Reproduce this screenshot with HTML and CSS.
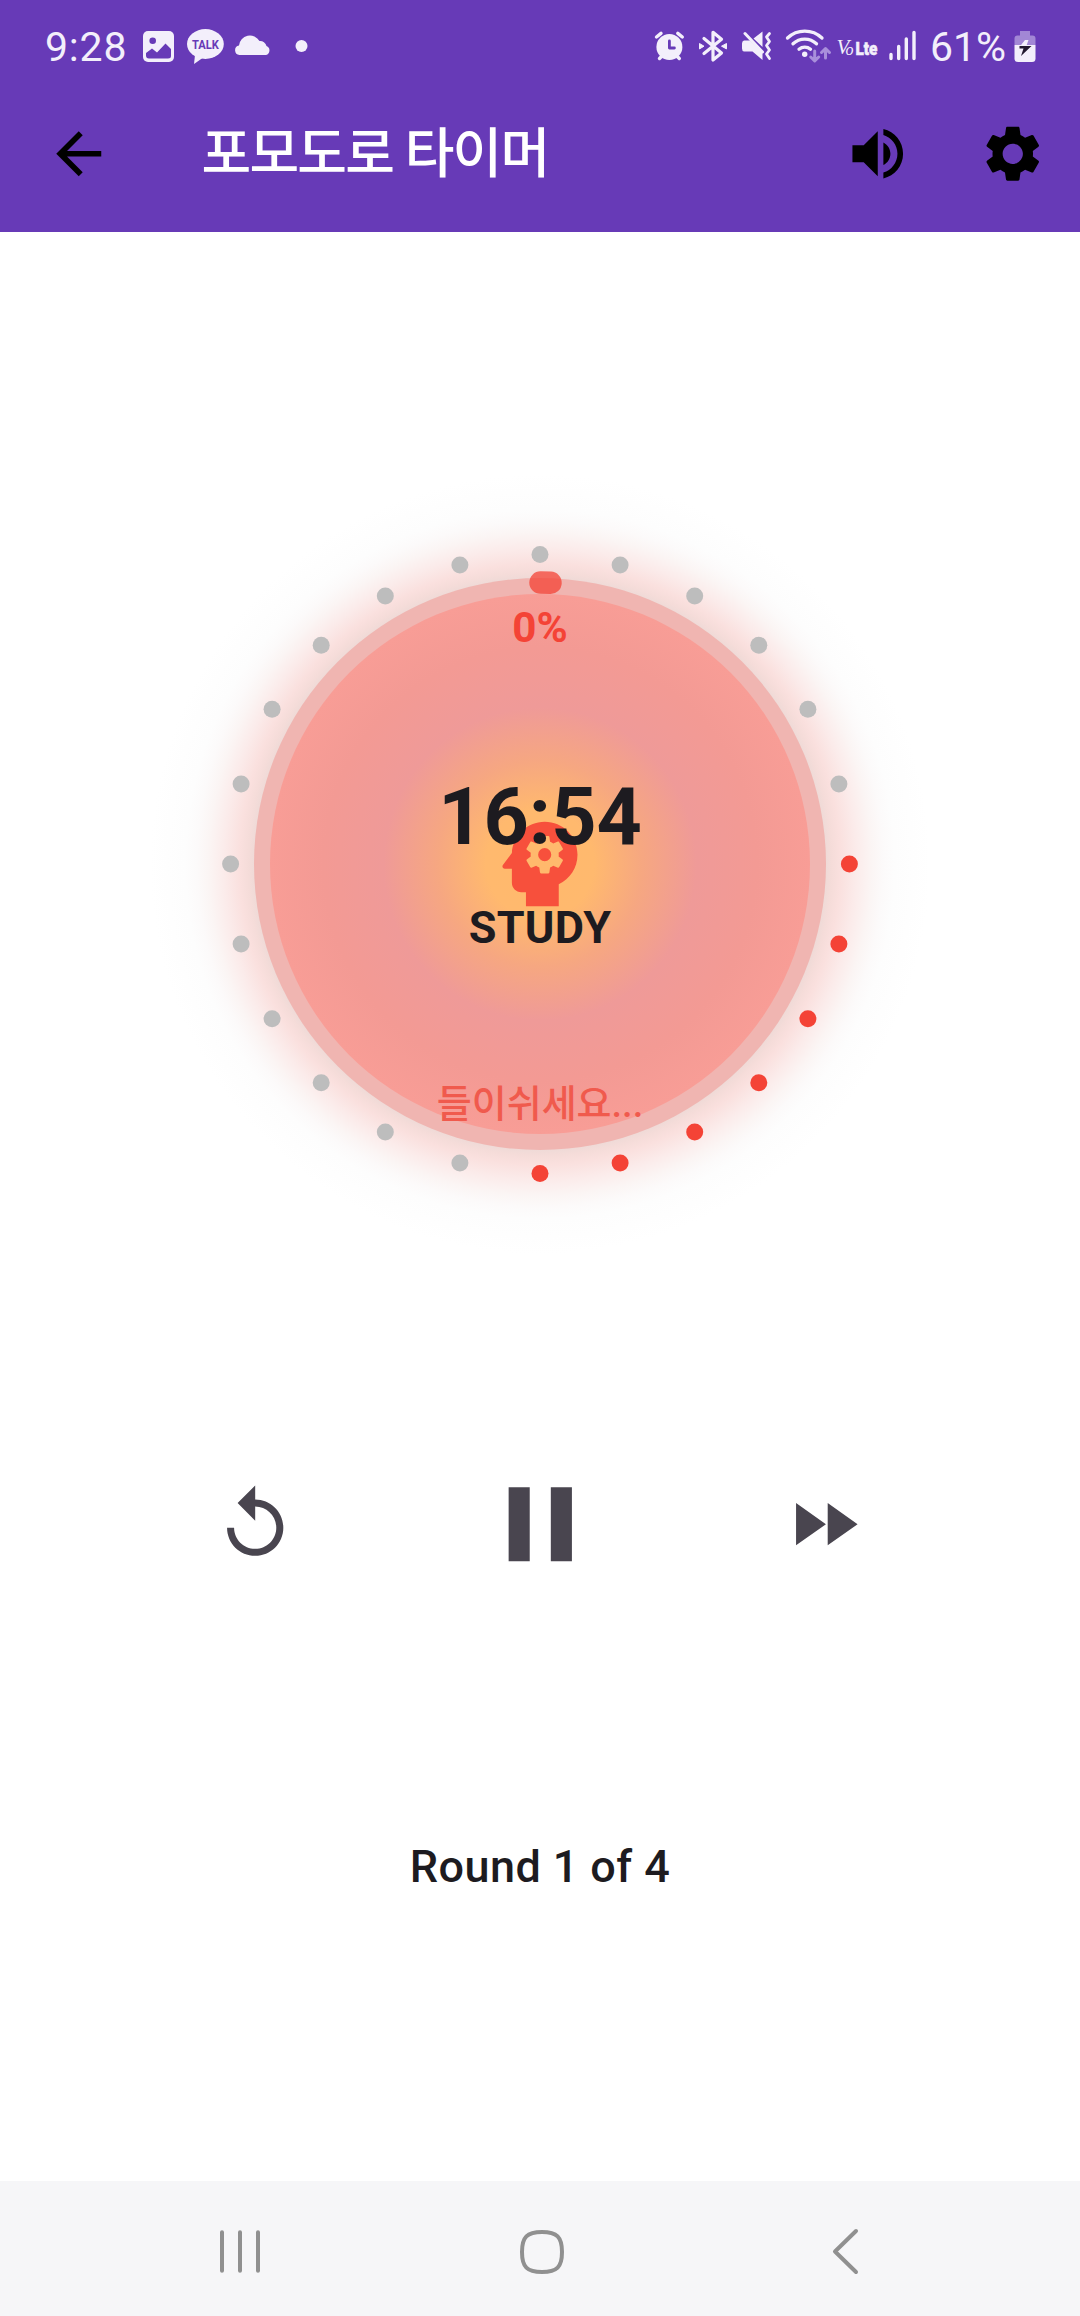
FILE: index.html
```html
<!DOCTYPE html>
<html lang="ko">
<head>
<meta charset="utf-8">
<title>포모도로 타이머</title>
<link rel="stylesheet" href="styles.css">
</head>
<body>
<div class="screen">
  <header class="top">
    <div class="status">
      <div class="status-left">
        <span class="clock">9:28</span>
        <svg class="photo" width="32" height="38" viewBox="143 28 32 38"><rect x="143" y="31" width="31" height="31" rx="5" fill="#f3effb"/><circle cx="152.700" cy="40.800" r="3.300" fill="#673ab7"/><path d="M146 53l6-4.500 5 4 8.500-9 5.500 5.500v7q0 2.500-3 2.500h-19q-3 0-3-3z" fill="#673ab7"/></svg>
        <svg class="talk" width="38" height="38" viewBox="187 28 38 38"><ellipse cx="205.400" cy="44" rx="18.400" ry="15" fill="#f3effb"/><path d="M195 55l-1 9 10-7z" fill="#f3effb"/><text x="205.400" y="49" text-anchor="middle" textLength="27" lengthAdjust="spacingAndGlyphs" class="talk-text">TALK</text></svg>
        <svg class="cloud" width="36" height="38" viewBox="235 28 36 38"><path d="M239.500 55h26a4.700 4.700 0 0 0 1-9 6.500 6.500 0 0 0-7-5 11 11 0 0 0-20.500 4.500 4.800 4.800 0 0 0 .5 9.500z" fill="#f3effb"/></svg>
        <svg class="dot" width="13" height="38" viewBox="294.500 28 13 38"><circle cx="301" cy="46" r="6" fill="#f3effb"/></svg>
      </div>
      <div class="status-right">
        <svg class="alarm" width="30" height="38" viewBox="655 28 30 38"><circle cx="669.400" cy="47" r="13" fill="#f3effb"/><path d="M656.500 37l4.500-3.600M682.300 37l-4.500-3.600M659.500 58.500l3-3M679.300 58.500l-3-3" stroke="#f3effb" stroke-width="3.400" stroke-linecap="round"/><path d="M669.400 41v7h5" fill="none" stroke="#673ab7" stroke-width="2.800" stroke-linecap="round" stroke-linejoin="round"/></svg>
        <svg class="bt" width="28" height="38" viewBox="699 28 28 38"><path d="M704 38.500l17.500 14.500-8.500 7V32.300l8.500 7L704 53.500" fill="none" stroke="#f3effb" stroke-width="3.200" stroke-linecap="round" stroke-linejoin="round"/><path d="M699.500 43.500l4.500 2.700-4.500 2.700zM726.500 43.500l-5 2.700 5 2.700z" fill="#f3effb" stroke="#f3effb" stroke-linejoin="round"/></svg>
        <svg class="mute" width="30" height="38" viewBox="742 28 30 38"><path d="M744 40.500h6l12.500 12V60l-10-8.500H744q-2-.5-2-3v-5q0-2.500 2-3zM753.500 38.500l9-7v15.500z" fill="#f3effb"/><path d="M745 33.500l17.500 18.500" stroke="#f3effb" stroke-width="3" stroke-linecap="round"/><path d="M769.500 33.500l-3 3.500 3 4.500-3 4 3 4.500-3 4 3 4.500" fill="none" stroke="#f3effb" stroke-width="2.800" stroke-linecap="round" stroke-linejoin="round"/></svg>
        <svg class="wifi" width="46" height="38" viewBox="785 28 46 38"><g fill="none" stroke="#f3effb" stroke-width="3.300" stroke-linecap="round"><path d="M787.500 38a25 25 0 0 1 34.500 0M793 43.800a17 17 0 0 1 23.500 0M799 49.200a9 9 0 0 1 11.500 0"/></g><circle cx="804.700" cy="54.200" r="2.700" fill="#f3effb"/><path d="M814.700 51v9M810.700 57l4 4 4-4M825.500 58v-9.500M821.500 52.500l4-4 4 4" fill="none" stroke="#a98fdb" stroke-width="3" stroke-linecap="round" stroke-linejoin="round"/></svg>
        <svg class="volte" width="41" height="38" viewBox="837 28 41 38"><text x="836.500" y="53.500" class="vo-v">V</text><text x="845.500" y="54.500" class="vo-o">o</text><text x="855.500" y="54.700" class="vo-lte" textLength="22" lengthAdjust="spacingAndGlyphs">Lte</text></svg>
        <svg class="signal" width="28" height="38" viewBox="889 28 28 38"><path d="M891 54.500v4M898.700 46.500v12M906.300 39v19.500M914 32.500v26" stroke="#f3effb" stroke-width="3.400" stroke-linecap="round"/></svg>
        <span class="percent">61%</span>
        <svg class="battery" width="22" height="38" viewBox="1013.500 28 22 38"><path d="M1019.500 31h10v4.500h2.500q3 0 3 3V45h-21v-6.500q0-3 3-3h2.500z" fill="#a287d5"/><path d="M1014 45h21v13.500q0 3.500-3.500 3.500h-14q-3.500 0-3.500-3.500z" fill="#f3effb"/><path d="M1019 47l5.500-7h3.500l-2 5.500z" fill="#f3effb"/><path d="M1019 46h12l-10.500 10 2.500-7.500h-4z" fill="#22192f"/></svg>
      </div>
    </div>
    <div class="appbar">
      <div class="leading"><svg class="icon" viewBox="0 0 24 24"><path d="M20 11H7.830l5.590-5.590L12 4l-8 8 8 8 1.410-1.410L7.830 13H20v-2z"/></svg></div>
      <h1 class="title">포모도로 타이머</h1>
      <div class="action"><svg class="icon" viewBox="0 0 24 24"><path d="M3 9v6h4l5 5V4L7 9H3zm13.500 3c0-1.770-1.020-3.290-2.500-4.030v8.050c1.480-.73 2.500-2.250 2.500-4.020zM14 3.230v2.060c2.890.86 5 3.540 5 6.710s-2.110 5.850-5 6.710v2.060c4.010-.91 7-4.490 7-8.770s-2.990-7.860-7-8.770z"/></svg></div>
      <div class="action"><svg class="icon" viewBox="0 0 24 24"><path d="M19.140 12.940c.04-.3.06-.61.06-.94 0-.32-.02-.64-.07-.94l2.030-1.580c.18-.14.23-.41.12-.61l-1.920-3.320c-.12-.22-.37-.29-.59-.22l-2.390.96c-.5-.38-1.030-.7-1.620-.94l-.36-2.540c-.04-.24-.24-.41-.48-.41h-3.840c-.24 0-.43.17-.47.41l-.36 2.540c-.59.24-1.130.57-1.620.94l-2.390-.96c-.22-.08-.47 0-.59.22L2.740 8.870c-.12.21-.08.47.12.61l2.030 1.580c-.05.3-.09.63-.09.94s.02.64.07.94l-2.030 1.580c-.18.14-.23.41-.12.61l1.920 3.320c.12.22.37.29.59.22l2.390-.96c.5.38 1.030.7 1.620.94l.36 2.540c.05.24.24.41.48.41h3.840c.24 0 .44-.17.47-.41l.36-2.540c.59-.24 1.130-.56 1.620-.94l2.390.96c.22.08.47 0 .59-.22l1.920-3.320c.12-.22.07-.47-.12-.61l-2.010-1.580zM12 15.600c-1.980 0-3.600-1.620-3.600-3.600s1.620-3.600 3.600-3.600 3.600 1.620 3.600 3.600-1.620 3.600-3.600 3.600z"/></svg></div>
    </div>
  </header>

  <main class="content">
    <div class="timer">
      <svg class="dial" viewBox="-400 -400 800 800">
        <defs>
          <radialGradient id="glow" gradientUnits="userSpaceOnUse" cx="0" cy="0" r="390">
            <stop offset=".733" stop-color="#efdad7"/>
            <stop offset=".748" stop-color="#f5dcd9"/>
            <stop offset=".77" stop-color="#fae0de"/>
            <stop offset=".81" stop-color="#fbebea"/>
            <stop offset=".85" stop-color="#fbf5f4"/>
            <stop offset=".88" stop-color="#fcfafa"/>
            <stop offset=".91" stop-color="#fdfdfd"/>
            <stop offset="1" stop-color="#fff"/>
          </radialGradient>
          <radialGradient id="disc" gradientUnits="userSpaceOnUse" cx="0" cy="0" r="270">
            <stop offset="0" stop-color="#ffb96c"/>
            <stop offset=".2" stop-color="#ffb96e"/>
            <stop offset=".38" stop-color="#f6a781"/>
            <stop offset=".58" stop-color="#ef9a98"/>
            <stop offset=".8" stop-color="#f39a94"/>
            <stop offset="1" stop-color="#f89d96"/>
          </radialGradient>
          <mask id="cog" maskUnits="userSpaceOnUse" x="0" y="0" width="24" height="24">
            <rect width="24" height="24" fill="#fff"/>
            <path transform="translate(13 10) scale(.4) translate(-12 -12)" fill="#000" d="M12 15.500A3.500 3.500 0 0 1 8.500 12A3.500 3.500 0 0 1 12 8.500A3.500 3.500 0 0 1 15.500 12A3.500 3.500 0 0 1 12 15.500M19.430 12.970C19.470 12.650 19.500 12.330 19.500 12C19.500 11.670 19.470 11.340 19.430 11L21.540 9.370C21.730 9.220 21.780 8.950 21.660 8.730L19.660 5.270C19.540 5.050 19.270 4.960 19.050 5.050L16.560 6.050C16.040 5.660 15.500 5.320 14.870 5.070L14.500 2.420C14.460 2.180 14.250 2 14 2H10C9.750 2 9.540 2.180 9.500 2.420L9.130 5.070C8.500 5.320 7.960 5.660 7.440 6.050L4.950 5.050C4.730 4.960 4.460 5.050 4.340 5.270L2.340 8.730C2.210 8.950 2.270 9.220 2.460 9.370L4.570 11C4.530 11.340 4.500 11.670 4.500 12C4.500 12.330 4.530 12.650 4.570 12.970L2.460 14.630C2.270 14.780 2.210 15.050 2.340 15.270L4.340 18.730C4.460 18.950 4.730 19.030 4.950 18.950L7.440 17.940C7.960 18.340 8.500 18.680 9.130 18.930L9.500 21.580C9.540 21.820 9.750 22 10 22H14C14.250 22 14.460 21.820 14.500 21.580L14.870 18.930C15.500 18.670 16.040 18.340 16.560 17.940L19.050 18.950C19.270 19.030 19.540 18.950 19.660 18.730L21.660 15.270C21.780 15.050 21.730 14.780 21.540 14.630L19.430 12.970Z"/>
          </mask>
        </defs>
        <circle r="390" fill="url(#glow)"/>
        <circle r="286" fill="#f0b5b1"/>
        <circle r="270" fill="url(#disc)"/>
        <g fill="#f44336">
          <circle cx="309.400" cy="0" r="8.500"/><circle cx="298.900" cy="80.100" r="8.500"/><circle cx="267.900" cy="154.700" r="8.500"/><circle cx="218.800" cy="218.800" r="8.500"/><circle cx="154.700" cy="267.900" r="8.500"/><circle cx="80.100" cy="298.900" r="8.500"/><circle cx="0" cy="309.400" r="8.500"/>
        </g>
        <g fill="#bdbdbd">
          <circle cx="-80.100" cy="298.900" r="8.500"/><circle cx="-154.700" cy="267.900" r="8.500"/><circle cx="-218.800" cy="218.800" r="8.500"/><circle cx="-267.900" cy="154.700" r="8.500"/><circle cx="-298.900" cy="80.100" r="8.500"/><circle cx="-309.400" cy="0" r="8.500"/><circle cx="-298.900" cy="-80.100" r="8.500"/><circle cx="-267.900" cy="-154.700" r="8.500"/><circle cx="-218.800" cy="-218.800" r="8.500"/><circle cx="-154.700" cy="-267.900" r="8.500"/><circle cx="-80.100" cy="-298.900" r="8.500"/><circle cx="0" cy="-309.400" r="8.500"/><circle cx="80.100" cy="-298.900" r="8.500"/><circle cx="154.700" cy="-267.900" r="8.500"/><circle cx="218.800" cy="-218.800" r="8.500"/><circle cx="267.900" cy="-154.700" r="8.500"/><circle cx="298.900" cy="-80.100" r="8.500"/>
        </g>
        <path d="M.5-281.400a281 281 0 0 1 10 .2" fill="none" stroke="#f44336" stroke-opacity=".75" stroke-width="22.500" stroke-linecap="round"/>
        <g transform="translate(-56.250 -56.250) scale(4.6875)">
          <path mask="url(#cog)" fill="#f7503c" d="M13 3C9.230 3 6.190 5.950 6 9.660L4.080 12.190C3.840 12.500 4.080 13 4.500 13H6V16C6 17.110 6.890 18 8 18H9V21H16V16.310C18.370 15.190 20 12.800 20 10C20 6.140 16.880 3 13 3Z"/>
        </g>
      </svg>
      <div class="progress">0%</div>
      <div class="time">16:54</div>
      <div class="mode">STUDY</div>
      <div class="breath">들이쉬세요...</div>
    </div>

    <div class="controls">
      <svg class="control" viewBox="0 0 24 24"><path d="M12 5V1L7 6l5 5V7c3.310 0 6 2.690 6 6s-2.690 6-6 6-6-2.690-6-6H4c0 4.420 3.580 8 8 8s8-3.580 8-8-3.580-8-8-8z"/></svg>
      <svg class="control main-control" viewBox="0 0 24 24"><path d="M6 19h4V5H6v14zm8-14v14h4V5h-4z"/></svg>
      <svg class="control" viewBox="0 0 24 24"><path d="M4 18l8.500-6L4 6v12zm9-12v12l8.500-6L13 6z"/></svg>
    </div>

    <p class="round">Round 1 of 4</p>
  </main>

  <nav class="navbar">
    <svg width="42" height="48" viewBox="0 0 42 48"><path d="M3 4.200v38.600M21 4.200v38.600M39 4.200v38.600"/></svg>
    <svg width="48" height="48" viewBox="0 0 48 48"><path d="M24 4c15 0 20 5 20 20s-5 20-20 20S4 39 4 24 9 4 24 4z"/></svg>
    <svg width="28" height="48" viewBox="0 0 28 48"><path d="M25 3L4 23.500 25 44"/></svg>
  </nav>
</div>
</body>
</html>
```
FILE: styles.css
```css
* { box-sizing: border-box; }

body {
  margin: 0;
  background: #fff;
  color: #1d1b20;
  font-family: Roboto, "Noto Sans CJK KR", sans-serif;
}

.screen {
  width: 1080px;
  height: 2316px;
  display: flex;
  flex-direction: column;
  overflow: hidden;
}

/* status bar and app bar */
.top { height: 232.3px; flex: none; background: #673ab7; }
.status {
  height: 75px;
  display: flex;
  justify-content: space-between;
  padding: 28px 44.5px 0 45px;
  color: #f3effb;
}
.status-left, .status-right { display: flex; align-items: flex-start; }
.status svg { flex: none; overflow: visible; }
.clock, .percent { font-size: 41px; line-height: 38px; height: 38px; white-space: nowrap; }
.clock { width: 98px; letter-spacing: .8px; }
.percent { width: 83.5px; margin-left: 13px; letter-spacing: 0; }
.talk { margin-left: 12px; }
.cloud { margin-left: 10px; }
.dot { margin-left: 23.5px; }
.bt { margin-left: 14px; }
.mute { margin-left: 15px; }
.wifi { margin-left: 13px; }
.volte { margin-left: 6px; }
.signal { margin-left: 11px; }
.talk-text { font: 700 13px Roboto, sans-serif; fill: #673ab7; }
.vo-v { font: italic 21px "Liberation Serif", serif; fill: #f3effb; }
.vo-o { font: italic 16px "Liberation Serif", serif; fill: #f3effb; }
.vo-lte { font: 900 18px Roboto, sans-serif; fill: #f3effb; stroke: #f3effb; stroke-width: .5px; }

.appbar { height: 157.5px; display: flex; align-items: center; }
.leading { width: 157.5px; display: flex; justify-content: center; }
.action { width: 135px; display: flex; justify-content: center; }
.icon { width: 67.5px; height: 67.5px; display: block; }
.title {
  flex: 1;
  margin: 0;
  padding: 3px 0 0 44px;
  color: #fff;
  font-size: 54px;
  line-height: 70px;
  font-weight: 500;
  letter-spacing: -1.8px;
}

/* timer */
.content { flex: 1; display: flex; flex-direction: column; align-items: center; }
.timer { position: relative; width: 800px; height: 800px; margin-top: 231.7px; flex: none; }
.dial { display: block; width: 800px; height: 800px; }
.progress, .time, .mode, .breath {
  position: absolute;
  left: 0;
  width: 100%;
  text-align: center;
  white-space: nowrap;
}
.progress { top: 139px; font-size: 42.2px; line-height: 50px; font-weight: 700; color: #f44336; }
.time { top: 307px; font-size: 79px; line-height: 92px; font-weight: 700; }
.mode { top: 438px; font-size: 45px; line-height: 52px; font-weight: 700; letter-spacing: .2px; }
.breath { top: 613px; font-size: 38px; line-height: 54px; font-weight: 500; color: #f05a4d; }

.controls {
  margin-top: 197.4px;
  display: grid;
  grid-template-columns: repeat(3, 284.6px);
  place-items: center;
}
.control { width: 84.375px; height: 84.375px; fill: #49454f; }
.main-control { width: 126.56px; height: 126.56px; }

.round { margin: 252.9px 0 0; font-size: 45px; line-height: 52px; font-weight: 500; letter-spacing: .42px; }

/* system navigation */
.navbar {
  height: 135px;
  flex: none;
  padding: 6px 221px 0 219px;
  background: #f6f6f8;
  display: grid;
  grid-template-columns: 42px 48px 28px;
  align-items: center;
  column-gap: 257px;
  justify-content: start;
}
.navbar svg { fill: none; stroke: #909090; stroke-width: 4; stroke-linecap: round; stroke-linejoin: round; }
.navbar svg:last-child { margin-left: 8px; }
```
